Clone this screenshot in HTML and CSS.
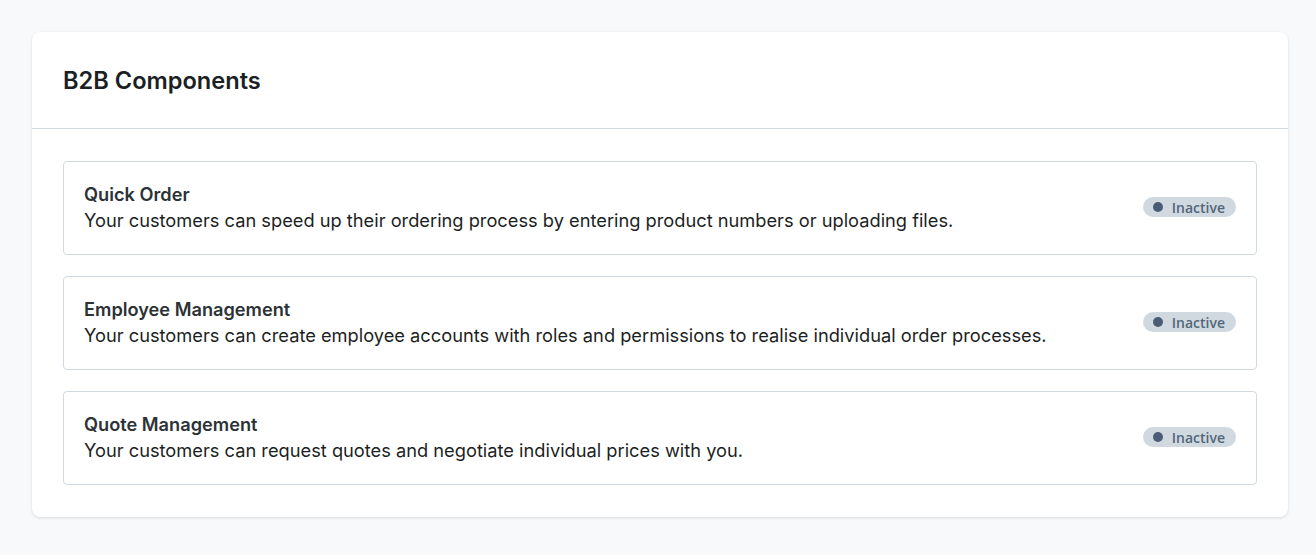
FILE: index.html
```html
<!DOCTYPE html>
<html>
<head>
<meta charset="utf-8">
<link rel="stylesheet" href="styles.css">
</head>
<body>
<div class="page">
  <section class="card">
    <header class="card-header">
      <h2 class="card-title">B2B Components</h2>
    </header>
    <div class="card-body">
      <div class="item">
        <div class="item-text">
          <div class="item-title">Quick Order</div>
          <div class="item-desc">Your customers can speed up their ordering process by entering product numbers or uploading files.</div>
        </div>
        <span class="badge"><span class="dot"></span>Inactive</span>
      </div>
      <div class="item">
        <div class="item-text">
          <div class="item-title">Employee Management</div>
          <div class="item-desc">Your customers can create employee accounts with roles and permissions to realise individual order processes.</div>
        </div>
        <span class="badge"><span class="dot"></span>Inactive</span>
      </div>
      <div class="item">
        <div class="item-text">
          <div class="item-title">Quote Management</div>
          <div class="item-desc">Your customers can request quotes and negotiate individual prices with you.</div>
        </div>
        <span class="badge"><span class="dot"></span>Inactive</span>
      </div>
    </div>
  </section>
</div>
</body>
</html>
```

FILE: styles.css
```css
* { box-sizing: border-box; }
html, body { margin: 0; padding: 0; }
body {
  background: #f8f9fb;
  font-family: Inter, "Liberation Sans", sans-serif;
  color: #1c1f23;
}
.page { padding: 32px 28px 38px 32px; }
.card {
  background: #fff;
  border-radius: 8px;
  box-shadow: 0 1px 3px rgba(0, 0, 0, 0.12), 0 0 1px rgba(0,0,0,0.06);
}
.card-header {
  height: 97px;
  padding: 0 31px;
  display: flex;
  align-items: center;
  border-bottom: 1px solid #d1d9e0;
}
.card-title {
  margin: 0;
  font-size: 23.6px;
  font-weight: 600;
  color: #1c1f23;
  line-height: 30px;
  padding-top: 1px;
}
.card-body {
  padding: 32px 31px;
  display: flex;
  flex-direction: column;
  gap: 21px;
}
.item {
  border: 1px solid #d1d9e0;
  border-radius: 4px;
  padding: 19px 20px 21px;
  display: flex;
  align-items: center;
  justify-content: space-between;
  min-height: 94px;
}
.item-title {
  font-size: 18.2px;
  font-weight: 600;
  line-height: 26px;
  color: #2c3236;
}
.item-desc {
  font-size: 18.25px;
  line-height: 26px;
  color: #1c1f23;
}
.badge {
  display: inline-flex;
  align-items: center;
  gap: 9px;
  height: 20px;
  padding: 0 11px 0 10px;
  border-radius: 10px;
  background: #d1d9e0;
  color: #52667a;
  font-family: "Open Sans", sans-serif;
  font-size: 14px;
  font-weight: 600;
  flex: none;
}
.dot {
  width: 10px;
  height: 10px;
  border-radius: 50%;
  background: #4a5d74;
}
```
